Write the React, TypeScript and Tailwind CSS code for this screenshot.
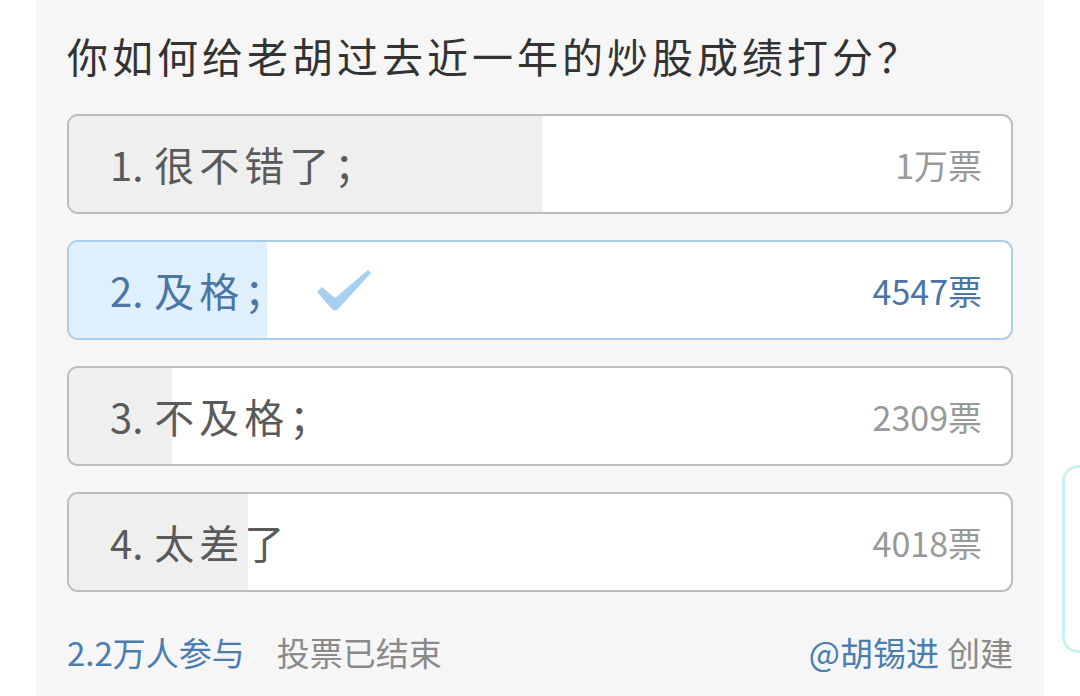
import React from 'react';

interface PollOption {
  num: string;
  label: string;
  votes: string;
  fill: number; // px width of the result bar
  picked?: boolean;
}

const options: PollOption[] = [
  { num: '1.', label: '很不错了；', votes: '1万票', fill: 473 },
  { num: '2.', label: '及格；', votes: '4547票', fill: 198, picked: true },
  { num: '3.', label: '不及格；', votes: '2309票', fill: 103 },
  { num: '4.', label: '太差了', votes: '4018票', fill: 179 },
];

const font = { fontFamily: '"Noto Sans CJK SC", "Noto Sans", sans-serif' };

const Check = () => (
  <svg width="56" height="44" viewBox="0 0 56 44" className="shrink-0">
    <path d="M2 23 L7 18 L20 29 L53 1 L56 4 L23 40 Q20 43 17 40 Z" fill="#a7cff2" />
  </svg>
);

const OptionRow = ({ opt }: { opt: PollOption }) => (
  <div
    className={`relative h-[100px] rounded-[11px] border-2 overflow-hidden bg-white ${
      opt.picked ? 'border-[#a9cfe8]' : 'border-[#bdbdbd]'
    }`}
  >
    {/* result bar */}
    <div
      className={`absolute inset-y-0 left-0 ${opt.picked ? 'bg-[#dfeffb]' : 'bg-[#efefef]'}`}
      style={{ width: opt.fill }}
    />
    <div className="relative flex h-full items-center pl-[41px] pr-[29px]">
      <span className={`text-[40px] ${opt.picked ? 'text-[#4a76a6]' : 'text-[#5a5a5a]'}`}>
        {opt.num}
      </span>
      <span
        className={`ml-[11px] text-[40px] tracking-[5px] ${
          opt.picked ? 'text-[#4a76a6]' : 'text-[#5a5a5a]'
        }`}
      >
        {opt.label}
      </span>
      {opt.picked && (
        <div className="ml-[26px] mt-[2px]">
          <Check />
        </div>
      )}
      <span
        className={`ml-auto text-[34px] ${opt.picked ? 'text-[#4a76a6]' : 'text-[#999999]'}`}
      >
        {opt.votes}
      </span>
    </div>
  </div>
);

export default function App() {
  return (
    <div className="flex w-[1080px] h-[696px] overflow-hidden bg-white" style={font}>
      {/* poll card */}
      <div className="ml-[36px] w-[1008px] shrink-0 bg-[#f6f6f6] px-[31px]">
        <h1 className="mt-[27px] h-[56px] text-[41px] leading-[56px] tracking-[4px] text-[#333333]">
          你如何给老胡过去近一年的炒股成绩打分？
        </h1>

        <div className="mt-[31px] flex flex-col gap-[26px]">
          {options.map((o) => (
            <OptionRow key={o.num} opt={o} />
          ))}
        </div>

        <div className="mt-[40px] flex h-[40px] items-center text-[33px] leading-[40px]">
          <span className="text-[#4a7db0]">2.2万人参与</span>
          <span className="ml-[32px] text-[#8a8a8a]">投票已结束</span>
          <span className="ml-auto text-[#4a7db0]">@胡锡进</span>
          <span className="ml-[8px] text-[#8a8a8a]">创建</span>
        </div>
      </div>

      {/* edge of the next card */}
      <div className="ml-[18px] mt-[465px] h-[188px] w-[60px] shrink-0 rounded-[16px] border-[3px] border-[#cdf0f0]" />
    </div>
  );
}
